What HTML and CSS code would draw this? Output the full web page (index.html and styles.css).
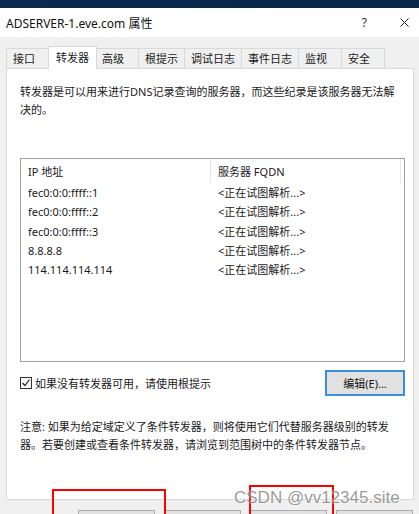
FILE: index.html
```html
<!DOCTYPE html>
<html lang="zh-CN">
<head>
    <meta charset="UTF-8">
    <meta name="viewport" content="width=device-width, initial-scale=1.0">
    <title>ADSERVER-1.eve.com 属性</title>
    <link rel="stylesheet" href="styles.css">
</head>
<body>

<div class="taskbar"></div>

<!-- Title Bar -->
<div class="titlebar">
    <span class="title">ADSERVER-1.eve.com 属性</span>
    <span class="help">?</span>
    <svg class="close" width="9" height="9" viewBox="0 0 9 9">
        <path d="M0.5 0.5 L8.5 8.5 M8.5 0.5 L0.5 8.5" stroke="#222" stroke-width="1" fill="none"/>
    </svg>
</div>

<div class="dialog">
    <!-- Tabs -->
    <div class="tabs">
        <div class="tab">接口</div>
        <div class="tab active">转发器</div>
        <div class="tab">高级</div>
        <div class="tab">根提示</div>
        <div class="tab">调试日志</div>
        <div class="tab">事件日志</div>
        <div class="tab">监视</div>
        <div class="tab">安全</div>
    </div>

    <!-- Forwarders Panel -->
    <div class="panel">
        <p class="intro">转发器是可以用来进行DNS记录查询的服务器，而这些纪录是该服务器无法解<br>决的。</p>

        <div class="list-box">
            <div class="list-row list-head">
                <div class="col-ip">IP 地址</div>
                <div class="col-fqdn">服务器 FQDN</div>
            </div>
            <div class="list-row">
                <div class="col-ip">fec0:0:0:ffff::1</div>
                <div class="col-fqdn">&lt;正在试图解析...&gt;</div>
            </div>
            <div class="list-row">
                <div class="col-ip">fec0:0:0:ffff::2</div>
                <div class="col-fqdn">&lt;正在试图解析...&gt;</div>
            </div>
            <div class="list-row">
                <div class="col-ip">fec0:0:0:ffff::3</div>
                <div class="col-fqdn">&lt;正在试图解析...&gt;</div>
            </div>
            <div class="list-row">
                <div class="col-ip">8.8.8.8</div>
                <div class="col-fqdn">&lt;正在试图解析...&gt;</div>
            </div>
            <div class="list-row">
                <div class="col-ip">114.114.114.114</div>
                <div class="col-fqdn">&lt;正在试图解析...&gt;</div>
            </div>
        </div>

        <div class="option-row">
            <label class="check">
                <span class="check-box">
                    <svg width="10" height="10" viewBox="0 0 10 10">
                        <path d="M1.5 5 L4 7.5 L8.5 1.5" stroke="#222" stroke-width="1.2" fill="none"/>
                    </svg>
                </span>
                如果没有转发器可用，请使用根提示
            </label>
            <button class="edit-btn">编辑(E)...</button>
        </div>

        <p class="note">注意: 如果为给定域定义了条件转发器，则将使用它们代替服务器级别的转发<br>器。若要创建或查看条件转发器，请浏览到范围树中的条件转发器节点。</p>
    </div>

    <!-- Dialog Buttons (only their top edge is in view) -->
    <div class="buttons">
        <button class="dlg-btn"></button>
        <button class="dlg-btn"></button>
        <button class="dlg-btn"></button>
        <button class="dlg-btn"></button>
    </div>
</div>

<!-- Annotations -->
<div class="mark mark-ok"></div>
<div class="mark mark-apply"></div>
<div class="watermark">CSDN @vv12345.site</div>

</body>
</html>
```

FILE: styles.css
```css
/* General Reset */
* {
    margin: 0;
    padding: 0;
    box-sizing: border-box;
    font-family: 'Noto Sans', 'Noto Sans CJK SC', sans-serif;
}

body {
    width: 419px;
    height: 514px;
    overflow: hidden;
    background-color: #f0f0f0;
    color: #1a1a1a;
    font-size: 11px;
    position: relative;
}

.taskbar {
    height: 8px;
    background: linear-gradient(to right, #0c2a4f, #06264a);
}

.titlebar {
    height: 29px;
    background-color: white;
    display: flex;
    align-items: center;
    padding-left: 6px;
}

.titlebar .title {
    font-size: 12px;
    flex: 1;
    color: #111;
}

.titlebar .help {
    font-size: 12px;
    color: #333;
    margin-right: 33px;
}

.titlebar .close {
    margin-right: 10px;
}

.dialog {
    padding: 9px 6px 0 6px;
}

.tabs {
    display: flex;
    align-items: flex-end;
    height: 22px;
}

.tab {
    height: 20px;
    min-width: 44px;
    padding: 0 6px;
    border: 1px solid #d9d9d9;
    border-bottom: none;
    margin-right: -1px;
    line-height: 19px;
    background-color: #f0f0f0;
}

.tab.active {
    height: 23px;
    margin-bottom: -1px;
    margin-left: -1px;
    margin-right: -2px;
    padding: 0 7px;
    background-color: white;
    position: relative;
    z-index: 1;
    line-height: 21px;
}

.panel {
    height: 432px;
    width: 408px;
    background-color: white;
    border: 1px solid #d9d9d9;
    padding: 14px 8px 0 13px;
}

.intro {
    line-height: 18px;
}

.list-box {
    margin-top: 39px;
    height: 204px;
    border: 1px solid #a0a0a0;
}

.list-row {
    display: flex;
    height: 19.3px;
    line-height: 19px;
}

.list-head {
    height: 24px;
    line-height: 26px;
}

.col-ip {
    width: 190px;
    padding-left: 7px;
}

.col-fqdn {
    padding-left: 7px;
}

.list-head .col-ip {
    border-right: 1px solid #e5e5e5;
}

.list-head .col-fqdn {
    width: 190px;
    border-right: 1px solid #e5e5e5;
}

.option-row {
    margin-top: 8px;
    display: flex;
    align-items: center;
    justify-content: space-between;
}

.check {
    display: flex;
    align-items: center;
}

.check-box {
    width: 12px;
    height: 12px;
    border: 1px solid #333;
    margin-right: 3px;
    display: flex;
    align-items: center;
    justify-content: center;
}

.edit-btn {
    width: 80px;
    height: 26px;
    background-color: #e1e1e1;
    border: 2px solid #3a8ee0;
    font-size: 11px;
    color: #111;
}

.note {
    margin-top: 22px;
    line-height: 18px;
}

.buttons {
    display: flex;
    gap: 9px;
    padding-left: 72px;
    margin-top: 10px;
}

.dlg-btn {
    width: 78px;
    height: 24px;
    background-color: #e1e1e1;
    border: 1px solid #adadad;
}

.mark {
    position: absolute;
    border: 2px solid #ff0000;
    border-bottom: none;
}

.mark-ok {
    left: 52px;
    top: 489px;
    width: 114px;
    height: 30px;
}

.mark-apply {
    left: 249px;
    top: 485px;
    width: 85px;
    height: 34px;
}

.watermark {
    position: absolute;
    left: 234px;
    top: 488px;
    font-family: 'Liberation Sans', sans-serif;
    font-size: 17px;
    color: rgba(110, 110, 110, 0.7);
    text-shadow: 0 0 2px rgba(255, 255, 255, 0.9);
    white-space: nowrap;
}
```
